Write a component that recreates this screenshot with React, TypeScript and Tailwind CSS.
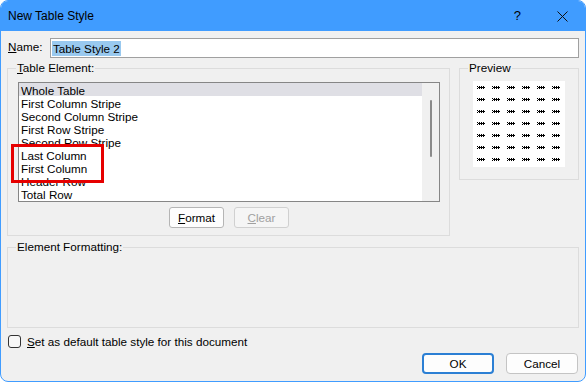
import React from 'react';

const items = [
  'Whole Table',
  'First Column Stripe',
  'Second Column Stripe',
  'First Row Stripe',
  'Second Row Stripe',
  'Last Column',
  'First Column',
  'Header Row',
  'Total Row',
];

// one little "⋙" mark of the preview table
const mark: [number, number][] = [
  [0, 0], [2, 0], [4, 0], [6, 0],
  [1, 1], [2, 1], [3, 1], [4, 1], [5, 1], [6, 1], [7, 1],
  [0, 2], [2, 2], [4, 2], [6, 2],
];

function PreviewGrid() {
  const cells: React.ReactNode[] = [];
  for (let r = 0; r < 7; r++) {
    for (let c = 0; c < 6; c++) {
      const x = 4 + c * 15;
      const y = 5 + r * 12;
      mark.forEach(([px, py]) => {
        cells.push(<rect key={`${r}-${c}-${px}-${py}`} x={x + px} y={y + py} width='1' height='1' fill='#000' />);
      });
    }
  }
  return (
    <svg width='92' height='86' viewBox='0 0 92 86' shapeRendering='crispEdges'>
      <rect width='92' height='86' fill='#fff' />
      {cells}
    </svg>
  );
}

export default function App() {
  return (
    <div className='h-[382px] w-[586px] bg-white font-["Liberation_Sans",Arial,sans-serif] text-[11.7px] text-black'>
      <div className='flex h-[382px] w-[586px] flex-col overflow-hidden rounded-[8px] border border-[#409cff] bg-[#f0f0f0]'>
        {/* title bar */}
        <div className='flex h-[30px] shrink-0 items-center bg-[#409cff] pl-[7px] text-[12px]'>
          <span className='flex-1'>New Table Style</span>
          <span className='mr-[36px] text-[13px]'>?</span>
          <svg width='11' height='11' viewBox='0 0 11 11' className='mr-[17px]'>
            <path d='M0.5 0.5L10.5 10.5M10.5 0.5L0.5 10.5' stroke='#111' strokeWidth='1' />
          </svg>
        </div>

        <div className='flex flex-col pl-[6px] pr-[6px]'>
          {/* name */}
          <div className='mt-[7px] flex h-[20px] items-center'>
            <span className='w-[43px] pl-[1px] pb-[2px]'>
              <u>N</u>ame:
            </span>
            <div className='flex h-[20px] w-[530px] items-center border border-[#a0a0a0] bg-white pl-[1px]'>
              <span className='bg-[#99c9ef] px-[1px] leading-[15px]'>Table Style 2</span>
            </div>
          </div>

          {/* table element + preview */}
          <div className='mt-[10px] flex gap-[9px]'>
            <div className='relative flex h-[168px] w-[443px] flex-col border border-[#dcdcdc] pl-[10px] pr-[9px] pt-[13px]'>
              <span className='absolute -top-[8px] left-[8px] bg-[#f0f0f0] px-[1px] leading-[14px]'>
                <u>T</u>able Element:
              </span>
              <div className='relative flex h-[120px] w-[422px] border border-[#868686] bg-white'>
                <div className='flex flex-1 flex-col'>
                  {items.map((item, i) => (
                    <div
                      key={item}
                      className={`h-[13px] pl-[2px] pt-[1px] leading-[13px] ${i === 0 ? 'bg-[#dfdfe5]' : ''}`}
                    >
                      {item}
                    </div>
                  ))}
                </div>
                <div className='flex w-[17px] justify-center bg-[#f0f0f0] pt-[17px]'>
                  <div className='h-[57px] w-[2px] rounded-full bg-[#8a8a8a]' />
                </div>
                {/* red highlight drawn over the list */}
                <div className='absolute -left-[8px] top-[61px] h-[39px] w-[93px] border-[3px] border-[#e60000]' />
              </div>
              <div className='mt-[5px] flex justify-center gap-[10px]'>
                <button className='h-[21px] w-[55px] rounded-[3px] border border-[#b5b5b5] bg-[#fdfdfd] leading-[19px]'>
                  <u>F</u>ormat
                </button>
                <button className='h-[21px] w-[55px] rounded-[3px] border border-[#d0d0d0] bg-[#f5f5f5] leading-[19px] text-[#a0a0a0]'>
                  <u>C</u>lear
                </button>
              </div>
            </div>

            <div className='relative h-[112px] w-[120px] border border-[#dcdcdc] pl-[13px] pt-[12px]'>
              <span className='absolute -top-[8px] left-[8px] bg-[#f0f0f0] px-[1px] leading-[14px]'>Preview</span>
              <PreviewGrid />
            </div>
          </div>

          {/* element formatting */}
          <div className='relative mt-[11px] h-[81px] w-[572px] border border-[#dcdcdc]'>
            <span className='absolute -top-[8px] left-[8px] bg-[#f0f0f0] px-[1px] leading-[14px]'>Element Formatting:</span>
          </div>

          {/* checkbox */}
          <div className='mt-[7px] flex h-[13px] items-center gap-[6px] pl-[1px]'>
            <div className='h-[13px] w-[13px] rounded-[3px] border border-[#333] bg-[#f7f7f7]' />
            <span>
              <u>S</u>et as default table style for this document
            </span>
          </div>

          {/* buttons */}
          <div className='mt-[5px] flex justify-end gap-[12px] pr-[1px]'>
            <button className='h-[21px] w-[72px] rounded-[4px] border-2 border-[#2b7fd4] bg-[#fdfdfd] leading-[17px]'>OK</button>
            <button className='h-[21px] w-[72px] rounded-[4px] border border-[#c4c4c4] bg-[#fdfdfd] leading-[19px]'>Cancel</button>
          </div>
        </div>
      </div>
    </div>
  );
}
